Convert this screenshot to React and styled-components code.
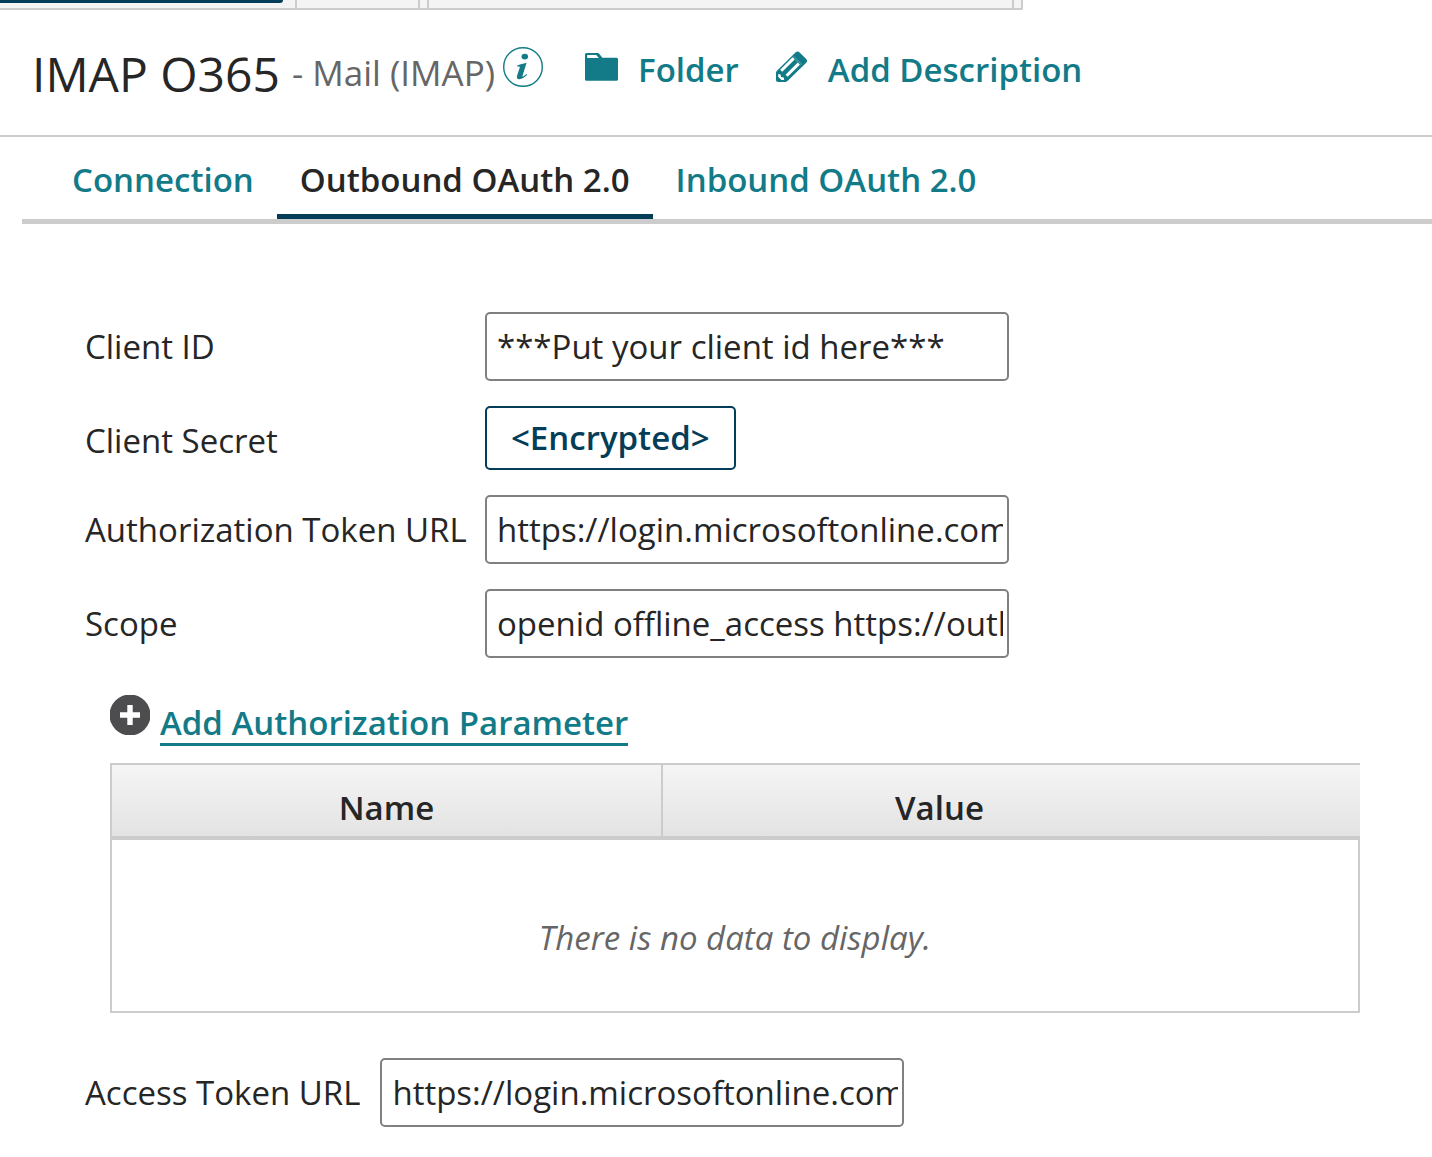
import React, { useState } from "react";
import styled, { createGlobalStyle, css } from 'styled-components';

export default function App() {
    const [activeTab, setActiveTab] = useState('outbound')
    const [values, setValues] = useState({
        clientId: '***Put your client id here***',
        authUrl: 'https://login.microsoftonline.com/',
        scope: 'openid offline_access https://outlook.office.com/',
        accessUrl: 'https://login.microsoftonline.com/',
    })

    const tabs = [
        { id: 'connection', label: 'Connection' },
        { id: 'outbound', label: 'Outbound OAuth 2.0' },
        { id: 'inbound', label: 'Inbound OAuth 2.0' },
    ]

    // Props shared by every text box of the form
    const bind = (name) => ({
        id: name,
        type: 'text',
        spellCheck: false,
        value: values[name],
        onChange: (e) => setValues({ ...values, [name]: e.target.value }),
    })

    return (
        <>
            <GlobalStyle />

            {/* Bottom edge of the component tab strip */}
            <TabStrip>
                <StripTab $width={297}><StripMarker /></StripTab>
                <StripTab $width={123} />
                <StripTab $width={9} />
                <StripTab $width={585} />
                <StripTab $width={9} $last />
            </TabStrip>

            <Header>
                <Title>IMAP O365</Title>
                <Subtitle>- Mail (IMAP)</Subtitle>
                <IconButton type="button" aria-label="Information"><InfoIcon /></IconButton>
                <HeaderLink href="#folder"><FolderIcon />Folder</HeaderLink>
                <HeaderLink href="#description"><PencilIcon />Add Description</HeaderLink>
            </Header>

            <Tabs role="tablist">
                {tabs.map((tab) => (
                    <Tab
                        key={tab.id}
                        type="button"
                        role="tab"
                        aria-selected={tab.id === activeTab}
                        $active={tab.id === activeTab}
                        onClick={() => setActiveTab(tab.id)}
                    >
                        {tab.label}
                    </Tab>
                ))}
            </Tabs>

            <Form>
                <Fields>
                    <Label htmlFor="clientId">Client ID</Label>
                    <Input {...bind('clientId')} />

                    <Label htmlFor="clientSecret">Client Secret</Label>
                    <SecretButton type="button" id="clientSecret">&lt;Encrypted&gt;</SecretButton>

                    <Label htmlFor="authUrl">Authorization Token URL</Label>
                    <Input {...bind('authUrl')} />

                    <Label htmlFor="scope">Scope</Label>
                    <Input {...bind('scope')} />
                </Fields>

                <Parameters>
                    <AddRow>
                        <PlusIcon />
                        <AddLink href="#add-parameter">Add Authorization Parameter</AddLink>
                    </AddRow>
                    <Table>
                        <thead>
                            <tr>
                                <HeadCell $divider>Name</HeadCell>
                                <HeadCell>Value</HeadCell>
                                <HeadCell as="td" $width={144} />
                            </tr>
                        </thead>
                        <tbody>
                            <tr>
                                <EmptyCell colSpan={3}>There is no data to display.</EmptyCell>
                            </tr>
                        </tbody>
                    </Table>
                </Parameters>

                <InlineField>
                    <Label htmlFor="accessUrl">Access Token URL</Label>
                    <Input {...bind('accessUrl')} />
                </InlineField>
            </Form>
        </>
    );
}

/*==================== ICONS ====================*/
function InfoIcon() {
    return (
        <svg width="40" height="40" viewBox="0 0 40 40" aria-hidden="true">
            <circle cx="20" cy="20" r="19.3" fill="none" stroke={colors.teal} strokeWidth="1.4" />
            <ellipse cx="21.8" cy="9.6" rx="3.3" ry="2.9" fill={colors.teal} />
            <path
                d="M14.2 18.4C17 17.6 20 16.6 23.6 15.8L19.6 28.4C19.2 29.8 20 29.8 21 29L23.6 27L24.2 27.8C21.6 30.6 18.6 32.2 16.4 32.2C14 32.2 13.4 30.6 14.2 28.2L16.8 20.4C17 19.6 16.6 19.3 14.2 19.4Z"
                fill={colors.teal}
            />
        </svg>
    );
}

function FolderIcon() {
    return (
        <svg width="33" height="28" viewBox="0 0 33 28" aria-hidden="true">
            <path d="M1.5 0H12.5C13.5 0 14 .4 14.6 1.2L17.4 4.8H31.5A1.5 1.5 0 0 1 33 6.3V26.2A1.5 1.5 0 0 1 31.5 27.7H1.5A1.5 1.5 0 0 1 0 26.2V1.5A1.5 1.5 0 0 1 1.5 0Z" fill={colors.teal} />
            <path d="M2.2 2H11.2L13.8 5.1H2.2Z" fill="#fff" />
        </svg>
    );
}

function PencilIcon() {
    return (
        <svg width="32" height="32" viewBox="0 0 32 32" aria-hidden="true">
            <path d="M19.5 1.4C20.9.1 22.2.1 23.6 1.4L30.2 8C31.5 9.3 31.5 10.5 30.2 11.8L12 29.6C11.2 30.5 10.5 31 9.4 31H2.2C.8 31 0 30.2 0 28.8V22C0 20.8.4 20.2 1.2 19.4Z" fill={colors.teal} />
            <path d="M17.6 7.4L5.2 19.8M22.8 12.6L10.6 24.8" fill="none" stroke="#fff" strokeWidth="3" />
            <path d="M16.2 6.4L18.2 4.8L26.4 13L24.6 14.8Z" fill="#fff" fillOpacity="0.15" />
            <path d="M2.2 23L4.6 23.4L5 26L7.8 26.6L8.2 29H5.4L2.2 25.8Z" fill="#fff" />
        </svg>
    );
}

function PlusIcon() {
    return (
        <svg width="40" height="40" viewBox="0 0 40 40" aria-hidden="true">
            <circle cx="20" cy="20" r="20.5" fill="#4d4d4f" />
            <path d="M17.3 10H22.7V17.3H30V22.7H22.7V30H17.3V22.7H10V17.3H17.3Z" fill="#fff" />
        </svg>
    );
}

/*==================== STYLES ====================*/
const colors = {
    teal: '#127b87',
    navy: '#033d58',
    text: '#262626',
    muted: '#666',
    line: '#ccc',
    field: '#808080',
}

const GlobalStyle = createGlobalStyle`
    *, *::before, *::after {
        box-sizing: border-box;
    }
    body {
        margin: 0;
        background: #fff;
        color: ${colors.text};
        font-family: "Open Sans", sans-serif;
        font-size: 33px;
        line-height: 46px;
    }
    button, input {
        font: inherit;
    }
    svg {
        display: block;
        flex: none;
    }
`;

const TabStrip = styled.div`
    display: flex;
    height: 10px;
`;

const StripTab = styled.div`
    width: ${({ $width }) => $width}px;
    background: #f4f4f4;
    border-right: 2px solid ${colors.line};
    border-bottom: 2px solid ${colors.line};
    border-bottom-right-radius: ${({ $last }) => ($last ? '2px' : 0)};
`;

const StripMarker = styled.div`
    width: 283px;
    height: 3px;
    background: ${colors.navy};
    border-bottom-right-radius: 3px;
`;

const Header = styled.header`
    display: flex;
    align-items: flex-start;
    padding: 36px 32px 34px;
    border-bottom: 2px solid ${colors.line};
    white-space: nowrap;
`;

const Title = styled.h1`
    margin: 0 12px 0 0;
    font-size: 48px;
    line-height: 55px;
    font-weight: 400;
`;

const Subtitle = styled.span`
    margin-right: 8px;
    color: ${colors.muted};
    font-size: 35px;
    line-height: 54px;
`;

const IconButton = styled.button`
    margin: 1px 42px 0 0;
    padding: 0;
    border: 0;
    background: none;
    cursor: pointer;
`;

const HeaderLink = styled.a`
    display: flex;
    align-items: center;
    gap: 20px;
    height: 48px;
    margin-right: 37px;
    color: ${colors.teal};
    font-weight: 600;
    text-decoration: none;
    svg {
        margin-bottom: 6px;
    }
`;

const Tabs = styled.div`
    display: flex;
    margin-left: 22px;
    padding-left: 27px;
    border-bottom: 5px solid ${colors.line};
`;

const Tab = styled.button`
    padding: 20px 23px 11px;
    border: 0;
    border-bottom: 5px solid transparent;
    background: none;
    color: ${colors.teal};
    font-weight: 600;
    cursor: pointer;
    ${({ $active }) => $active && css`
        color: ${colors.text};
        border-bottom-color: ${colors.navy};
    `}
`;

const Form = styled.form`
    padding: 88px 72px 30px 85px;
`;

const Fields = styled.div`
    display: grid;
    grid-template-columns: 380px 524px;
    align-items: start;
    gap: 25px 20px;
`;

const Label = styled.label`
    padding-top: 12px;
    white-space: nowrap;
`;

const Input = styled.input`
    width: 524px;
    height: 69px;
    padding: 0 4px 0 10px;
    border: 2px solid ${colors.field};
    border-radius: 5px;
    background: #fff;
    color: ${colors.text};
`;

const SecretButton = styled.button`
    justify-self: start;
    height: 64px;
    padding: 0 24px;
    border: 2px solid ${colors.navy};
    border-radius: 5px;
    background: #fff;
    color: ${colors.navy};
    font-weight: 600;
    cursor: pointer;
`;

const Parameters = styled.section`
    margin: 37px 0 45px 25px;
`;

const AddRow = styled.div`
    display: flex;
    align-items: flex-start;
    gap: 10px;
    margin-bottom: 17px;
`;

const AddLink = styled.a`
    margin-top: 7px;
    border-bottom: 3px solid ${colors.teal};
    color: ${colors.teal};
    font-weight: 600;
    line-height: 41px;
    text-decoration: none;
`;

const Table = styled.table`
    width: 100%;
    table-layout: fixed;
    border-spacing: 0;
`;

const HeadCell = styled.th`
    width: ${({ $width }) => ($width ? `${$width}px` : 'auto')};
    height: 77px;
    padding: 14px 0 0;
    border: 0 solid ${colors.line};
    border-width: 2px 0 4px;
    background: linear-gradient(#f5f5f5, #e3e3e3);
    font-weight: 600;
    ${({ $divider }) => $divider && css`
        border-left-width: 2px;
        border-right-width: 2px;
    `}
`;

const EmptyCell = styled.td`
    height: 173px;
    padding: 25px 0 0;
    border: 2px solid ${colors.line};
    border-top: 0;
    color: ${colors.muted};
    font-style: italic;
    text-align: center;
`;

const InlineField = styled.div`
    display: flex;
    align-items: flex-start;
    gap: 20px;
`;
